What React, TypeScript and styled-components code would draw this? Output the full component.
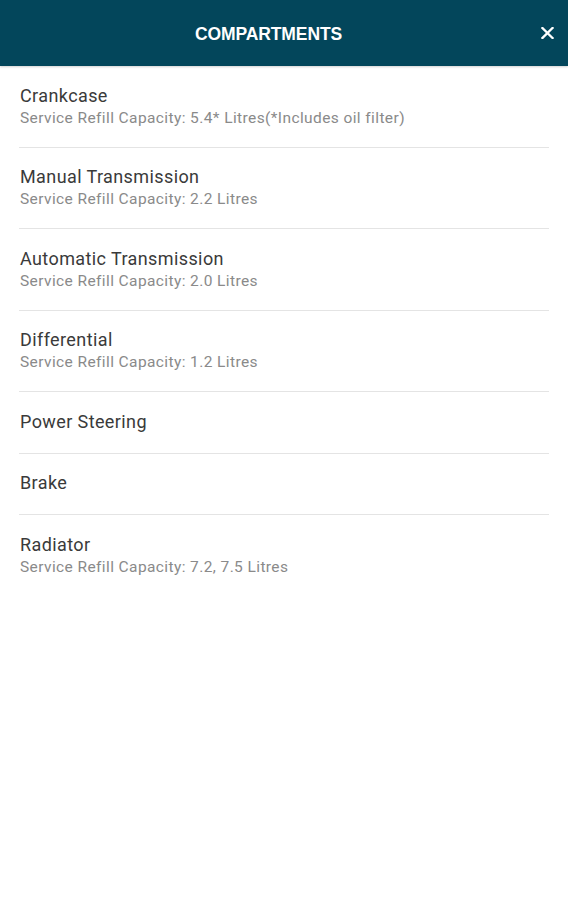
import React from "react";
import styled, { createGlobalStyle } from "styled-components";

const GlobalStyle = createGlobalStyle`
  html, body { margin: 0; padding: 0; background: #ffffff; }
  body { font-family: Roboto, "Noto Sans", sans-serif; }
`;

const Page = styled.div`
  width: 568px;
  min-height: 900px;
  background: #ffffff;
  display: flex;
  flex-direction: column;
`;

const Header = styled.header`
  position: relative;
  height: 66px;
  padding-right: 31px;
  padding-top: 2px;
  box-sizing: border-box;
  background: #03465b;
  display: flex;
  align-items: center;
  justify-content: center;
  box-shadow: 0 1px 2px rgba(0, 0, 0, 0.18);
  z-index: 1;
`;

const Title = styled.h1`
  margin: 0;
  font-family: "Liberation Sans", Arial, sans-serif;
  font-weight: 700;
  font-size: 17.5px;
  color: #ffffff;
  letter-spacing: -0.1px;
`;

const CloseButton = styled.button`
  position: absolute;
  right: 12px;
  top: 24px;
  width: 18px;
  height: 18px;
  padding: 0;
  border: 0;
  background: transparent;
  display: flex;
  align-items: center;
  justify-content: center;
  cursor: pointer;
`;

const List = styled.ul`
  list-style: none;
  margin: 0;
  padding: 0 19px;
`;

const Item = styled.li`
  padding: 16.5px 0 19px 1px;
  border-bottom: 1px solid #e4e4e4;
  &:last-child { border-bottom: none; }
`;

const ItemTitle = styled.div`
  font-size: 18px;
  line-height: 25px;
  letter-spacing: 0.4px;
  color: #3a3a3a;
`;

const ItemSub = styled.div`
  font-size: 15.5px;
  line-height: 20px;
  letter-spacing: 0.4px;
  color: #8a8a8a;
`;

const items: { name: string; sub?: string }[] = [
  { name: "Crankcase", sub: "Service Refill Capacity: 5.4* Litres(*Includes oil filter)" },
  { name: "Manual Transmission", sub: "Service Refill Capacity: 2.2 Litres" },
  { name: "Automatic Transmission", sub: "Service Refill Capacity: 2.0 Litres" },
  { name: "Differential", sub: "Service Refill Capacity: 1.2 Litres" },
  { name: "Power Steering" },
  { name: "Brake" },
  { name: "Radiator", sub: "Service Refill Capacity: 7.2, 7.5 Litres" },
];

export default function App() {
  return (
    <Page>
      <GlobalStyle />
      <Header>
        <Title>COMPARTMENTS</Title>
        <CloseButton aria-label="Close">
          <svg width="13" height="12" viewBox="0 0 13 12">
            <path d="M1.5 1 L11.5 11 M11.5 1 L1.5 11" stroke="#ffffff" strokeWidth="2.3" strokeLinecap="square" />
          </svg>
        </CloseButton>
      </Header>
      <List>
        {items.map((it) => (
          <Item key={it.name}>
            <ItemTitle>{it.name}</ItemTitle>
            {it.sub && <ItemSub>{it.sub}</ItemSub>}
          </Item>
        ))}
      </List>
    </Page>
  );
}
